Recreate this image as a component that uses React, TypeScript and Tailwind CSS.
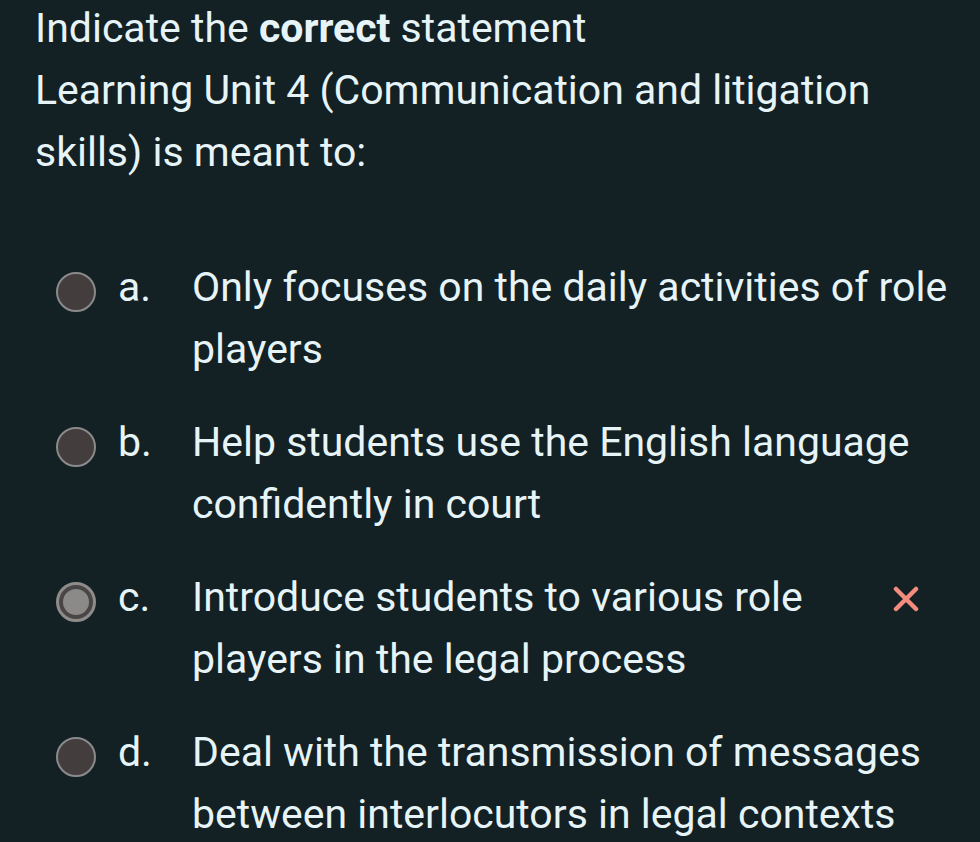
import React from 'react';

const options = [
  { key: 'a.', text: 'Only focuses on the daily activities of role players', selected: false },
  { key: 'b.', text: 'Help students use the English language confidently in court', selected: false },
  { key: 'c.', text: 'Introduce students to various role players in the legal process', selected: true, wrong: true },
  { key: 'd.', text: 'Deal with the transmission of messages between interlocutors in legal contexts', selected: false },
];

function Radio({ selected }: { selected: boolean }) {
  if (selected) {
    return (
      <div className="mt-4 w-10 h-10 shrink-0 rounded-full border-[3px] border-[#8d8c8a] bg-[#4a4546] flex items-center justify-center">
        <div className="w-[26px] h-[26px] rounded-full bg-[#8b8a88]" />
      </div>
    );
  }
  return <div className="mt-4 w-10 h-10 shrink-0 rounded-full border-[2.5px] border-[#8a8a8a] bg-[#433d3e]" />;
}

export default function App() {
  return (
    <main
      className="w-[980px] h-[842px] overflow-hidden bg-[#132024] text-[#e6f4f8] text-[41px] leading-[62px]"
      style={{ fontFamily: 'Roboto, "Noto Sans", sans-serif' }}
    >
      <div className="pl-[35px] pr-[90px] -mt-[3px]">
        <p>
          Indicate the <strong className="font-bold">correct</strong> statement
        </p>
        <p>Learning Unit 4 (Communication and litigation skills) is meant to:</p>
      </div>

      <section className="mt-[73px] pl-[56px] pr-[20px] flex flex-col gap-[31px]">
        {options.map((o) => (
          <div key={o.key} className="flex items-start">
            <Radio selected={o.selected} />
            <span className="ml-[22px] w-[74px] shrink-0">{o.key}</span>
            <span className={o.wrong ? 'w-[690px]' : 'flex-1'}>{o.text}</span>
            {o.wrong && (
              <svg className="ml-[11px] mt-[20px] shrink-0" width="26" height="26" viewBox="0 0 26 26">
                <path d="M3 3 L23 23 M23 3 L3 23" stroke="#f38b7e" strokeWidth="4.5" strokeLinecap="round" />
              </svg>
            )}
          </div>
        ))}
      </section>
    </main>
  );
}
